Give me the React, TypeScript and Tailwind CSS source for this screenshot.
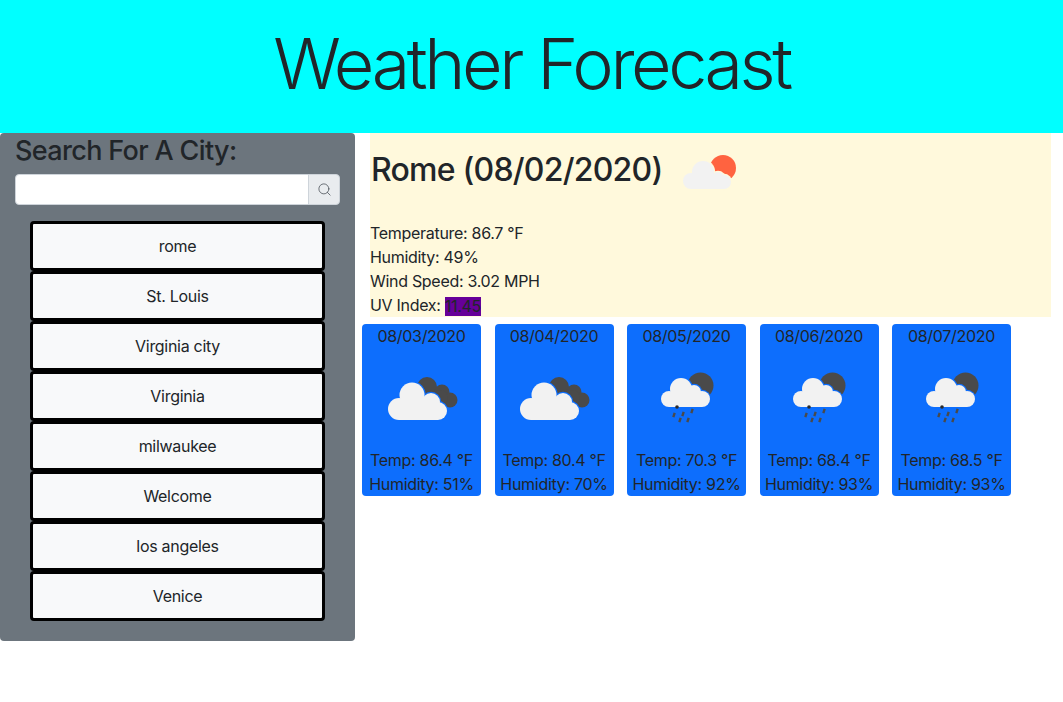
import React from 'react';
import { Search } from 'lucide-react';

type Circle = [number, number, number];

interface IconShape {
  cloud: Circle[];
  base: [number, number, number, number];
  back: Circle[];
  backColor: string;
  rain?: boolean;
}

const SUN: IconShape = {
  cloud: [[691, 181, 8], [703, 172, 11], [718, 179, 7], [724, 182, 7]],
  base: [691, 175, 33, 14],
  back: [[723, 168, 13]],
  backColor: '#ff6340',
};

const CLOUDS: IconShape = {
  cloud: [[399, 409, 11], [412, 395, 12.5], [431, 402, 9], [438, 411, 9]],
  base: [399, 400, 39, 20],
  back: [[427, 387, 10], [442, 392, 7.5], [450, 400, 7.5], [440, 398, 8]],
  backColor: '#4a4a4a',
};

const RAIN: IconShape = {
  cloud: [[668, 399, 8], [680, 389, 11], [693, 392, 7], [701, 399, 8]],
  base: [668, 392, 33, 15],
  back: [[699.5, 385.5, 13]],
  backColor: '#4a4a4a',
  rain: true,
};

const RAIN_DROPS = [[673, 415], [682, 414], [691, 411], [679, 420], [687, 420]];

// shapes are written in page coordinates, the viewBox picks the part a card shows
const WeatherIcon = ({ shape, x, y, width, height, bg }: { shape: IconShape; x: number; y: number; width: number; height: number; bg: string }) => (
  <svg width={width} height={height} viewBox={`${x} ${y} ${width} ${height}`} className="block shrink-0">
    {shape.back.map((c, i) => (
      <circle key={i} cx={c[0]} cy={c[1]} r={c[2]} fill={shape.backColor} />
    ))}
    {shape.cloud.map((c, i) => (
      <circle key={i} cx={c[0]} cy={c[1]} r={c[2] + 1.2} fill={bg} />
    ))}
    <rect x={shape.base[0]} y={shape.base[1] - 1.2} width={shape.base[2]} height={shape.base[3] + 2.4} fill={bg} />
    {shape.cloud.map((c, i) => (
      <circle key={i} cx={c[0]} cy={c[1]} r={c[2]} fill="#f2f2f2" />
    ))}
    <rect x={shape.base[0]} y={shape.base[1]} width={shape.base[2]} height={shape.base[3]} fill="#f2f2f2" />
    {shape.rain && (
      <>
        <circle cx={676} cy={407} r={1.8} fill="#2b2b2b" />
        {RAIN_DROPS.map((d, i) => (
          <rect key={i} x={d[0] - 1.2} y={d[1] - 2.2} width={2.4} height={4.4} fill="#4a4a4a" transform={`rotate(18 ${d[0]} ${d[1]})`} />
        ))}
      </>
    )}
  </svg>
);

const cities = ['rome', 'St. Louis', 'Virginia city', 'Virginia', 'milwaukee', 'Welcome', 'los angeles', 'Venice'];

const forecast = [
  { date: '08/03/2020', temp: '86.4', humidity: '51', shape: CLOUDS, vx: 372 },
  { date: '08/04/2020', temp: '80.4', humidity: '70', shape: CLOUDS, vx: 372 },
  { date: '08/05/2020', temp: '70.3', humidity: '92', shape: RAIN, vx: 636 },
  { date: '08/06/2020', temp: '68.4', humidity: '93', shape: RAIN, vx: 636 },
  { date: '08/07/2020', temp: '68.5', humidity: '93', shape: RAIN, vx: 636 },
];

export default function App() {
  return (
    <div className="min-h-[702px] bg-white text-[#212529] font-['Inter',sans-serif] text-base leading-6 tracking-[-0.3px]">
      <header className="h-[133px] bg-[#00ffff] flex items-center justify-center pb-[5px]">
        <h1 className="text-[70px] leading-[86px] font-light tracking-[-3.4px]">Weather Forecast</h1>
      </header>

      <div className="flex items-start">
        <aside className="w-[355px] h-[508px] shrink-0 bg-[#6c757d] rounded-[4px] px-[15px]">
          <h3 className="pt-px text-[27px] leading-[34px] font-medium tracking-[-0.65px]">Search For A City:</h3>
          <div className="flex h-[31px] mt-[6px]">
            <input className="flex-1 min-w-0 bg-white border border-[#ced4da] rounded-l-[4px]" />
            <button className="w-[32px] flex items-center justify-center bg-[#e9ecef] border border-[#ced4da] -ml-px rounded-r-[4px]">
              <Search className="w-[15px] h-[15px] text-[#495057]" strokeWidth={1.25} />
            </button>
          </div>
          <div className="mt-[16px] px-[15px] flex flex-col">
            {cities.map((city) => (
              <button key={city} className="h-[50px] bg-[#f8f9fa] border-[3px] border-black rounded-[4px] text-center">
                {city}
              </button>
            ))}
          </div>
        </aside>

        <main className="flex-1 min-w-0 pl-[7px]">
          <section className="ml-[8px] w-[681px] h-[184px] bg-[#fff9dc]">
            <div className="flex h-[88px]">
              <h2 className="w-[290px] shrink-0 pt-[18px] pl-px text-[32px] leading-[38px] font-medium tracking-[-0.77px] whitespace-nowrap">Rome (08/02/2020)</h2>
              <WeatherIcon shape={SUN} x={660} y={133} width={100} height={88} bg="#fff9dc" />
            </div>
            <p>Temperature: 86.7 °F</p>
            <p>Humidity: 49%</p>
            <p>Wind Speed: 3.02 MPH</p>
            <p>
              UV Index: <span className="inline-block h-[19px] leading-[19px] align-middle bg-[#660099]">11.45</span>
            </p>
          </section>

          <div className="flex gap-[13.5px] mt-[7px]">
            {forecast.map((day) => (
              <div key={day.date} className="w-[119px] h-[172px] bg-[#0d6efd] rounded-[4px] flex flex-col items-center text-center whitespace-nowrap">
                <p>{day.date}</p>
                <WeatherIcon shape={day.shape} x={day.vx} y={348} width={100} height={100} bg="#0d6efd" />
                <p>Temp: {day.temp} °F</p>
                <p>Humidity: {day.humidity}%</p>
              </div>
            ))}
          </div>
        </main>
      </div>
    </div>
  );
}
